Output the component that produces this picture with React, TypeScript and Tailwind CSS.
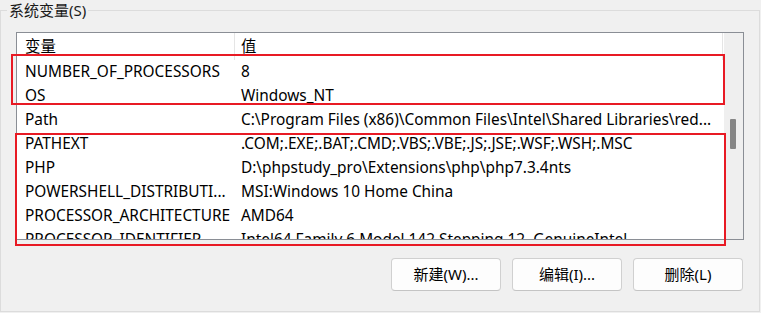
import React from 'react';

// System variables list, Windows "环境变量" dialog style, with two red review boxes on top.

const rows: [string, string][] = [
  ['NUMBER_OF_PROCESSORS', '8'],
  ['OS', 'Windows_NT'],
  ['Path', 'C:\\Program Files (x86)\\Common Files\\Intel\\Shared Libraries\\red...'],
  ['PATHEXT', '.COM;.EXE;.BAT;.CMD;.VBS;.VBE;.JS;.JSE;.WSF;.WSH;.MSC'],
  ['PHP', 'D:\\phpstudy_pro\\Extensions\\php\\php7.3.4nts'],
  ['POWERSHELL_DISTRIBUTI...', 'MSI:Windows 10 Home China'],
  ['PROCESSOR_ARCHITECTURE', 'AMD64'],
  ['PROCESSOR_IDENTIFIER', 'Intel64 Family 6 Model 142 Stepping 12, GenuineIntel'],
];

const font = "font-['Segoe_UI','Noto_Sans','Noto_Sans_CJK_SC',sans-serif]";

function Button({ label }: { label: string }) {
  return (
    <button className="h-[33px] w-[110px] rounded-[4px] border border-[#d0d0d0] border-b-[#c4c4c4] bg-[#fdfdfd] text-[15px] leading-none text-black">
      {label}
    </button>
  );
}

export default function App() {
  return (
    <div className={`relative h-[313px] w-[761px] overflow-hidden bg-[#f0f0f0] text-black ${font}`}>
      <fieldset className="m-0 h-[312px] w-[760px] border border-[#dcdcdc] px-[6px] pt-[12px] pb-0">
        <legend className="px-[2px] text-[15px] leading-[20px] text-[#1a1a1a]">系统变量(S)</legend>

        <div className="ml-[9px] w-[728px]">
          <div className="flex h-[208px] border border-[#8a8e95] bg-white">
            <div className="w-[706px] overflow-hidden">
              <div className="flex h-[27px] items-center border-r border-[#e5e5e5] text-[15.4px]">
                <div className="flex h-full w-[218px] items-center border-r border-[#e5e5e5] pl-[8px]">变量</div>
                <div className="pl-[6px]">值</div>
              </div>
              {rows.map(([name, value]) => (
                <div key={name} className="flex h-[24px] items-center whitespace-nowrap text-[15.4px]">
                  <div className="w-[218px] pl-[8px]">{name}</div>
                  <div className="pl-[6px]">{value}</div>
                </div>
              ))}
            </div>
            <div className="w-[20px] border-l border-white bg-[#efefef]">
              <div className="ml-[6px] mt-[86px] h-[30px] w-[6px] rounded-[1px] bg-[#868686]" />
            </div>
          </div>

          <div className="mt-[18px] flex justify-end gap-[11px] pr-[1px]">
            <Button label="新建(W)..." />
            <Button label="编辑(I)..." />
            <Button label="删除(L)" />
          </div>
        </div>
      </fieldset>

      {/* red annotation boxes drawn over the list */}
      <div className="pointer-events-none absolute left-[11px] top-[54px] h-[51px] w-[714px] border-2 border-[#e81a24]" />
      <div className="pointer-events-none absolute left-[15px] top-[133px] h-[113px] w-[711px] border-2 border-[#e81a24]" />
    </div>
  );
}
